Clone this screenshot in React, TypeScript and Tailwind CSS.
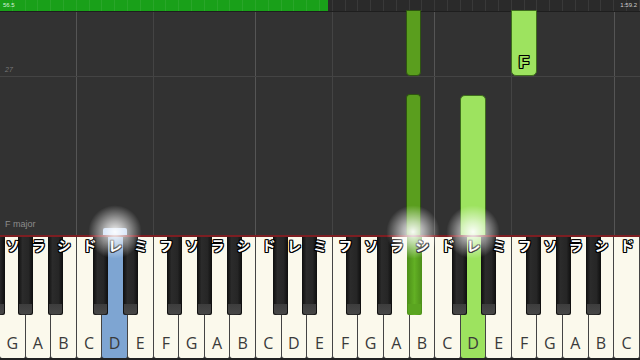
import React from "react";

const KW = 640 / 25;
const whites = ["G","A","B","C","D","E","F","G","A","B","C","D","E","F","G","A","B","C","D","E","F","G","A","B","C"];
const solf: Record<string, string> = { C: "ド", D: "レ", E: "ミ", F: "フ", G: "ソ", A: "ラ", B: "シ" };
const blackOffset: Record<string, number> = { C: -1.5, D: 2.5, F: -4.5, G: 0, A: 4.5 };

const outline = "[text-shadow:1px_0_0_#000,-1px_0_0_#000,0_1px_0_#000,0_-1px_0_#000,1px_1px_0_#000,-1px_-1px_0_#000,1px_-1px_0_#000,-1px_1px_0_#000]";
const glow = "absolute top-[205px] w-[54px] h-[54px] rounded-full bg-[radial-gradient(circle,rgba(255,255,255,0.95)_0%,rgba(255,255,255,0.6)_28%,rgba(255,255,255,0)_70%)]";

export default function App() {
  const blacks: { left: number; green: boolean }[] = [{ left: -10, green: false }];
  whites.forEach((n, i) => {
    if (n in blackOffset && i < whites.length - 1) {
      const c = (i + 1) * KW + blackOffset[n];
      blacks.push({ left: c - 7.5, green: i === 15 });
    }
  });

  return (
    <div className="relative w-[640px] h-[360px] overflow-hidden flex flex-col bg-[#323232] font-['Open_Sans',sans-serif]">
      {/* progress bar */}
      <div className="relative h-[12px] flex bg-[#2a2a2a] border-b border-[#1e1e1e]">
        <div className="w-[328px] h-full bg-[#19a019]" />
        <div className="absolute inset-0 flex">
          {Array.from({ length: 50 }).map((_, i) => (
            <div key={i} className="flex-1 border-r border-[rgba(255,255,255,0.07)]" />
          ))}
        </div>
        <div className="absolute inset-0 flex items-start justify-between px-[3px] pt-[2px] text-[6px] leading-[7px] font-['Liberation_Sans',sans-serif]">
          <span className="text-[#d8f0d8]">56.5</span>
          <span className="text-[#d0d0d0]">1:59.2</span>
        </div>
      </div>

      {/* note area */}
      <div className="relative h-[223px] flex flex-col">
        {/* grid columns */}
        <div className="absolute inset-0 flex">
          {whites.map((n, i) => (
            <div
              key={i}
              className={`flex-1 ${n === "C" ? "border-l border-[#555]" : n === "F" ? "border-l border-[#444]" : ""}`}
            />
          ))}
        </div>
        {/* measure rows */}
        <div className="relative h-[65px] border-b border-[#444] flex items-end pl-[5px] pb-[1px]">
          <span className="text-[7px] italic text-[#777] font-['Liberation_Sans',sans-serif]">27</span>
        </div>
        <div className="relative flex-1 flex items-end pl-[5px] pb-[4px]">
          <span className="text-[9px] text-[#8c8c8c] font-['Liberation_Sans',sans-serif]">F major</span>
        </div>

        {/* notes */}
        <div className="absolute left-[406px] top-[-2px] w-[15px] h-[66px] rounded-b-[4px] bg-[#5a9e1e] border border-[#2e5510]" />
        <div className="absolute left-[406px] top-[82px] w-[15px] bottom-0 rounded-t-[4px] bg-[#5a9e1e] border border-[#2e5510] border-b-0" />
        <div className="absolute left-[460px] top-[83px] w-[26px] bottom-0 rounded-t-[5px] bg-[#9de35f] border border-[#3e6d1c] border-b-0" />
        <div className="absolute left-[511px] top-[-2px] w-[26px] h-[66px] rounded-b-[5px] bg-[#9de35f] border border-[#3e6d1c] flex items-end justify-center pb-[2px]">
          <span className={`text-[17px] leading-[20px] font-semibold text-[#9de35f] ${outline} font-['Liberation_Sans',sans-serif]`}>F</span>
        </div>
        <div className="absolute left-[103px] bottom-0 w-[24px] h-[7px] bg-[#a9c8f0] rounded-t-[2px]" />
      </div>

      {/* red line */}
      <div className="h-[2px] bg-[#7d1e22]" />

      {/* keyboard */}
      <div className="relative h-[123px] flex bg-[#222]">
        {whites.map((n, i) => {
          const bg = i === 4 ? "bg-[#7ea5d2]" : i === 18 ? "bg-[#9de35f]" : "bg-[#fbf9ec]";
          return (
            <div key={i} className={`flex-1 h-[121px] ${bg} border-r border-[#444] rounded-b-[2px] flex items-end justify-center pb-[5px]`}>
              <span className="text-[16px] leading-[20px] text-[#3a3a3a] font-['Open_Sans',sans-serif]">{n}</span>
            </div>
          );
        })}
        {blacks.map((b, i) => (
          <div
            key={i}
            className={`absolute top-0 w-[15px] h-[78px] rounded-b-[2px] ${b.green ? "bg-[linear-gradient(to_right,#4d8f19,#62b024,#4d8f19)]" : "bg-[linear-gradient(to_right,#0e0e0e,#2b2b2b_30%,#262626_70%,#0e0e0e)]"} flex flex-col justify-end`}
            style={{ left: b.left }}
          >
            <div className={`h-[10px] mx-[1px] mb-[1px] rounded-b-[2px] ${b.green ? "bg-[#5aa420]" : "bg-[linear-gradient(to_bottom,#3d3d3d,#474747)]"}`} />
          </div>
        ))}
        {/* solfege labels */}
        <div className="absolute left-0 right-0 top-0 h-[16px] flex">
          {whites.map((n, i) => (
            <div key={i} className="flex-1 flex justify-center">
              <span className={`text-[14px] leading-[16px] font-bold text-white ${outline} font-['Noto_Sans_CJK_JP',sans-serif]`}>{solf[n]}</span>
            </div>
          ))}
        </div>
      </div>

      {/* glows */}
      <div className={`${glow} left-[88px]`} />
      <div className={`${glow} left-[386px]`} />
      <div className={`${glow} left-[446px]`} />
    </div>
  );
}
